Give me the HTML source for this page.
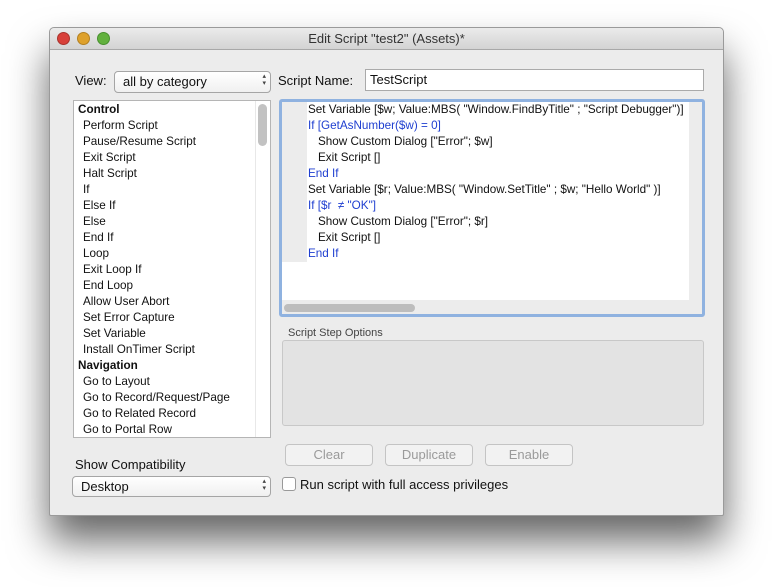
<!DOCTYPE html>
<html><head><style>
*{margin:0;padding:0;box-sizing:border-box}
body{width:773px;height:587px;background:#fff;position:relative;overflow:hidden;font-family:"Liberation Sans",sans-serif;font-size:12px;color:#111}
.a{position:absolute}
.win{left:49px;top:27px;width:675px;height:489px;background:#ececec;border:1px solid #9a9a9a;border-radius:5px 5px 2px 2px;box-shadow:0 25px 40px rgba(0,0,0,.6)}
.tb{left:0;top:0;width:673px;height:22px;background:linear-gradient(#ebebeb,#d3d3d3);border-bottom:1px solid #a8a8a8;border-radius:5px 5px 0 0;text-align:center;line-height:22px;font-size:13px;color:#333}
.dot{width:13px;height:13px;border-radius:50%;top:4px}
.pop{background:linear-gradient(#fff,#f0f0f0);border:1px solid #a5a5a5;border-radius:4px;font-size:13px;padding-left:8px;line-height:19px}
.pop:after{content:"▴\A▾";white-space:pre;position:absolute;right:4px;top:1px;font-size:7px;line-height:7px;color:#444}
.list{left:73px;top:100px;width:198px;height:338px;background:#fff;border:1px solid #b5b5b5;overflow:hidden}
.list div{height:16px;line-height:16px;font-size:11.7px;padding-left:9px;padding-top:1px}
.list .h{font-weight:bold;padding-left:4px}
.code div{height:16px;line-height:16px;font-size:11.7px;white-space:nowrap}
.b{color:#1f3fd0}
.btn{top:444px;width:88px;height:22px;border:1px solid #c4c4c4;border-radius:4px;background:#f2f2f2;color:#9a9a9a;text-align:center;line-height:20px;font-size:13px}
</style></head><body>
<div class="a win">
 <div class="a tb">Edit Script "test2" (Assets)*</div>
 <div class="a dot" style="left:7px;background:#d8403a;border:1px solid #a8332d"></div>
 <div class="a dot" style="left:27px;background:#dea12c;border:1px solid #b38022"></div>
 <div class="a dot" style="left:47px;background:#62b13e;border:1px solid #48902f"></div>
</div>
<div class="a" style="left:75px;top:73px;font-size:13px">View:</div>
<div class="a pop" style="left:114px;top:71px;width:157px;height:22px">all by category</div>
<div class="a" style="left:278px;top:73px;font-size:13px">Script Name:</div>
<div class="a" style="left:365px;top:69px;width:339px;height:22px;background:#fff;border:1px solid #aaa;font-size:13px;line-height:20px;padding-left:4px">TestScript</div>
<div class="a list">
 <div class="h">Control</div><div>Perform Script</div><div>Pause/Resume Script</div><div>Exit Script</div><div>Halt Script</div><div>If</div><div>Else If</div><div>Else</div><div>End If</div><div>Loop</div><div>Exit Loop If</div><div>End Loop</div><div>Allow User Abort</div><div>Set Error Capture</div><div>Set Variable</div><div>Install OnTimer Script</div><div class="h">Navigation</div><div>Go to Layout</div><div>Go to Record/Request/Page</div><div>Go to Related Record</div><div>Go to Portal Row</div>
 <span class="a" style="left:184px;top:3px;width:9px;height:42px;background:#c2c2c2;border-radius:5px"></span>
 <span class="a" style="left:181px;top:0;width:1px;height:338px;background:#e8e8e8"></span>
</div>
<div class="a" style="left:279px;top:99px;width:426px;height:218px;border:3px solid #8fb2e0;border-radius:3px;background:#ececec">
 <div class="a" style="left:0;top:0;width:407px;height:198px;background:#fff"></div>
 <div class="a" style="left:0;top:0;width:25px;height:160px;background:#ececec"></div>
 <div class="a code" style="left:26px;top:0px">
  <div>Set Variable [$w; Value:MBS( "Window.FindByTitle" ; "Script Debugger")]</div>
  <div class="b">If [GetAsNumber($w) = 0]</div>
  <div style="padding-left:10px">Show Custom Dialog ["Error"; $w]</div>
  <div style="padding-left:10px">Exit Script []</div>
  <div class="b">End If</div>
  <div>Set Variable [$r; Value:MBS( "Window.SetTitle" ; $w; "Hello World" )]</div>
  <div class="b">If [$r &nbsp;≠ "OK"]</div>
  <div style="padding-left:10px">Show Custom Dialog ["Error"; $r]</div>
  <div style="padding-left:10px">Exit Script []</div>
  <div class="b">End If</div>
 </div>
 <div class="a" style="left:2px;top:202px;width:131px;height:8px;background:#bdbdbd;border-radius:4px"></div>
</div>
<div class="a" style="left:288px;top:327px;font-size:11px;color:#444">Script Step Options</div>
<div class="a" style="left:282px;top:340px;width:422px;height:86px;background:#e3e3e3;border:1px solid #c8c8c8;border-radius:3px"></div>
<div class="a btn" style="left:285px">Clear</div>
<div class="a btn" style="left:385px">Duplicate</div>
<div class="a btn" style="left:485px">Enable</div>
<div class="a" style="left:75px;top:457px;font-size:13px">Show Compatibility</div>
<div class="a pop" style="left:72px;top:476px;width:199px;height:21px">Desktop</div>
<div class="a" style="left:282px;top:477px;width:14px;height:14px;background:#fff;border:1px solid #999;border-radius:3px"></div>
<div class="a" style="left:300px;top:477px;font-size:13px">Run script with full access privileges</div>
</body></html>
